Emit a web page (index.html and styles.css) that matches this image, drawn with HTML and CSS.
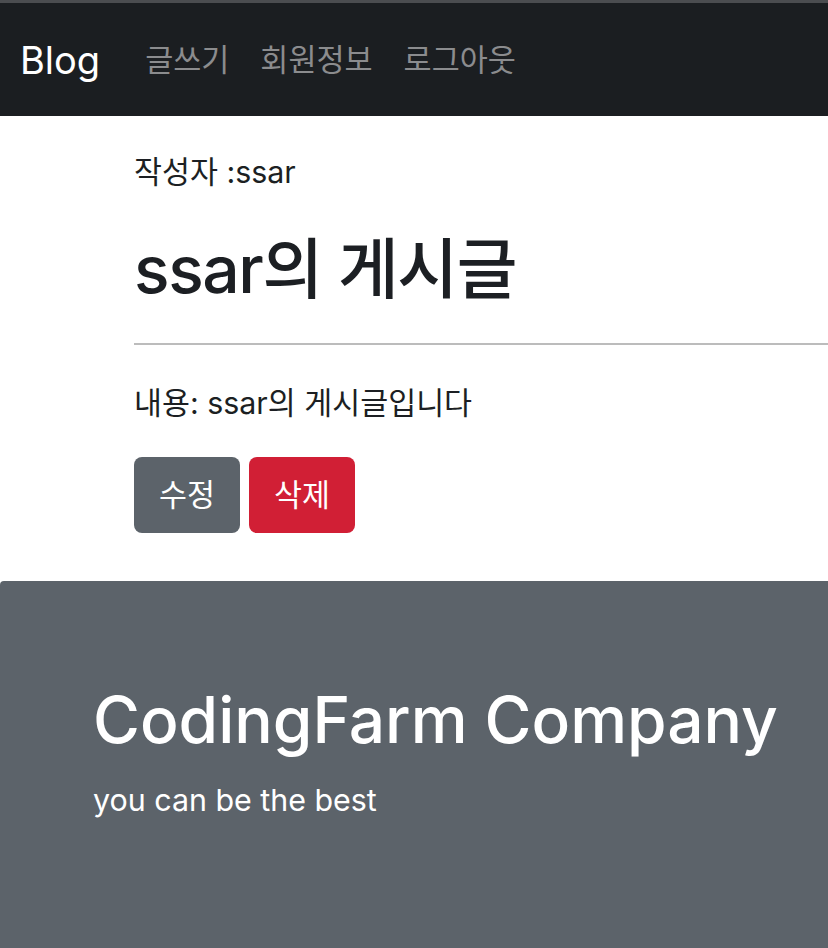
FILE: index.html
```html
<!DOCTYPE html>
<html lang="ko">
<head>
<meta charset="utf-8">
<title>Blog</title>
<link rel="stylesheet" href="styles.css">
</head>
<body>
<nav class="navbar">
  <a class="brand" href="#">Blog</a>
  <ul class="nav-links">
    <li><a href="#">글쓰기</a></li>
    <li><a href="#">회원정보</a></li>
    <li><a href="#">로그아웃</a></li>
  </ul>
</nav>
<main class="container">
  <p class="author">작성자 :ssar</p>
  <h1 class="title">ssar의 게시글</h1>
  <hr class="divider">
  <p class="content">내용: ssar의 게시글입니다</p>
  <div class="actions">
    <button class="btn btn-secondary">수정</button>
    <button class="btn btn-danger">삭제</button>
  </div>
</main>
<footer class="jumbo">
  <h2 class="jumbo-title">CodingFarm Company</h2>
  <p class="jumbo-text">you can be the best</p>
</footer>
</body>
</html>
```
FILE: styles.css
```css
* { box-sizing: border-box; }
html, body { margin: 0; padding: 0; }
body {
  font-family: "Inter", "Noto Sans CJK KR", sans-serif;
  color: #1c1f23;
  background: #ffffff;
  font-size: 30.4px;
  line-height: 44px;
  overflow-x: hidden;
}
.navbar {
  display: flex;
  align-items: center;
  height: 116px;
  border-top: 3px solid #4b4d50;
  background: #1b1e21;
  padding: 0 20px;
}
.brand {
  color: #ffffff;
  text-decoration: none;
  font-size: 38px;
  margin-right: 45px;
}
.nav-links {
  display: flex;
  gap: 31px;
  list-style: none;
  margin: 0;
  padding: 0;
}
.nav-links a {
  color: #8b8c8e;
  text-decoration: none;
  font-size: 30.5px;
}
.container {
  padding: 34px 0 0 134px;
}
.author { margin: 0; }
.title {
  margin: 34px 0 0;
  font-size: 66px;
  font-weight: 550;
  letter-spacing: -1.4px;
  line-height: 82px;
}
.divider {
  margin: 33px -20px 0 0;
  border: 0;
  border-top: 2px solid #bcbcbc;
}
.content { margin: 36px 0 0; }
.actions {
  display: flex;
  gap: 9px;
  margin-top: 32px;
}
.btn {
  font-family: inherit;
  font-size: 30.4px;
  line-height: 44px;
  padding: 15px 24px;
  border: 1px solid transparent;
  border-radius: 8px;
  color: #ffffff;
}
.btn-secondary { background: #5c636a; }
.btn-danger { background: #d11f35; }
.jumbo {
  margin-top: 48px;
  background: #5c636a;
  color: #ffffff;
  border-top-left-radius: 4px;
  padding: 101px 0 140px 93px;
  min-height: 400px;
}
.jumbo-title {
  margin: 0;
  font-size: 64px;
  font-weight: 500;
  line-height: 1.2;
}
.jumbo-text { margin: 19px 0 0; }
```
